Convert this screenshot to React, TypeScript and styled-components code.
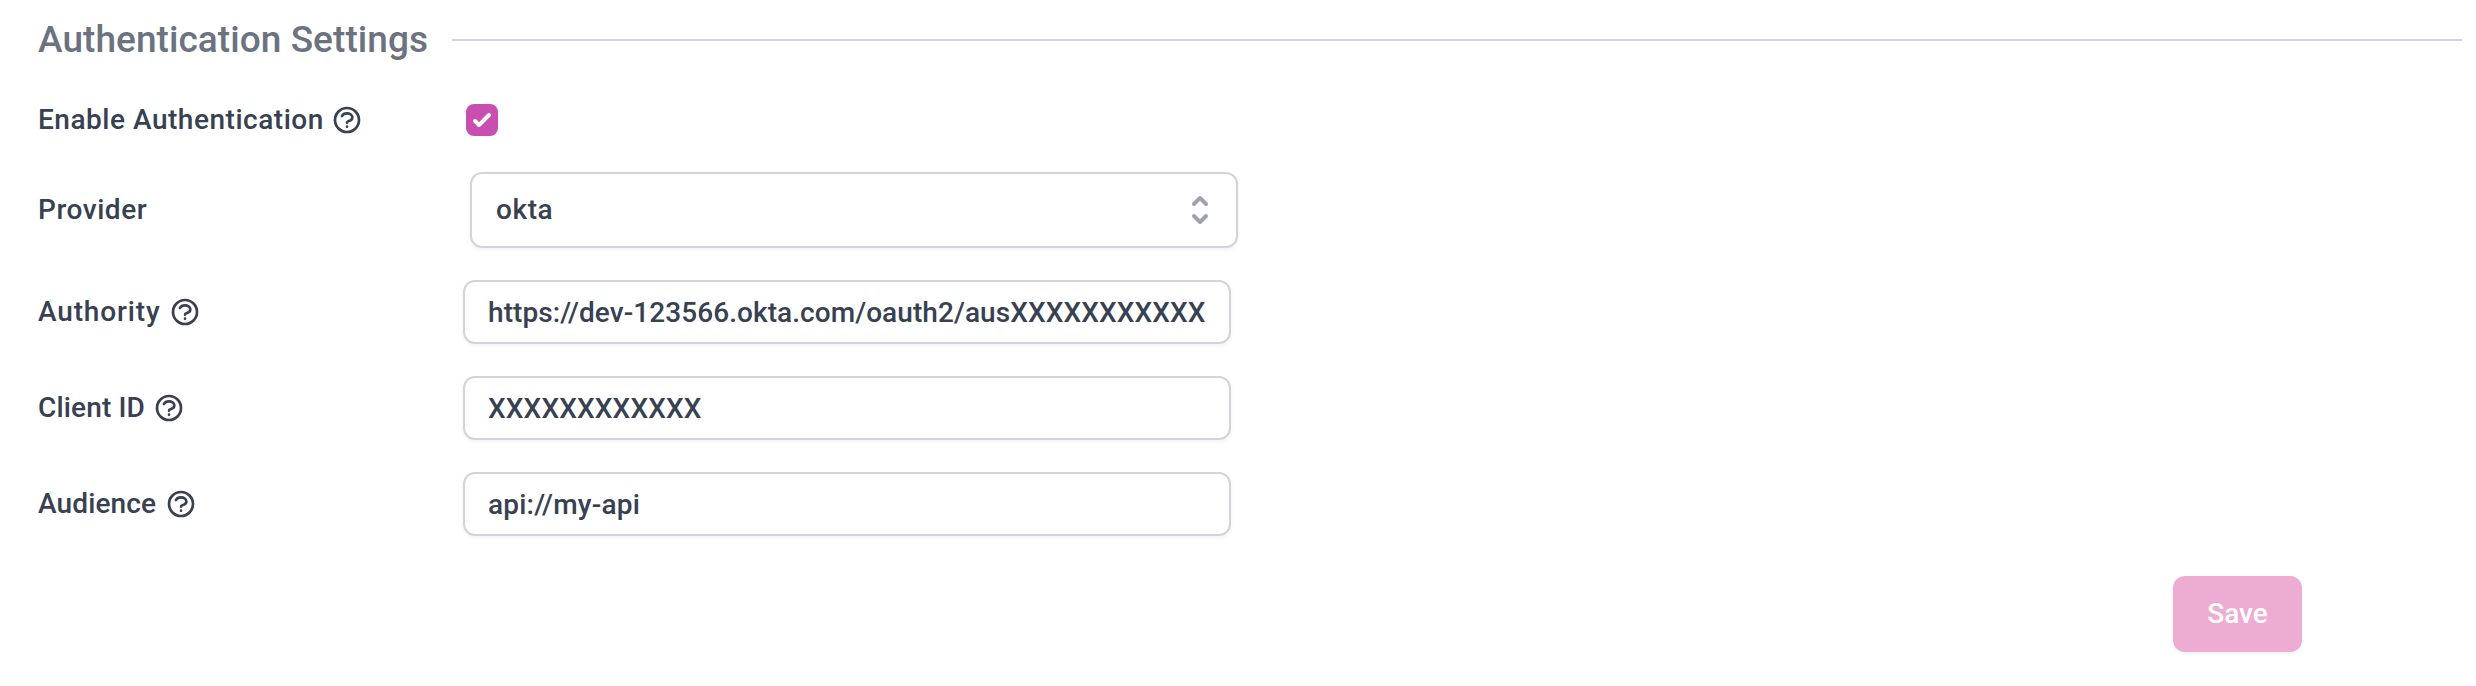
import React, { useState } from 'react';
import styled, { createGlobalStyle } from 'styled-components';

const GlobalStyle = createGlobalStyle`
  *, *::before, *::after { box-sizing: border-box; }
  body {
    margin: 0;
    background: #fff;
    color: #374151;
    font-family: Roboto, "Liberation Sans", sans-serif;
    font-size: 28px;
    font-weight: 500;
  }
`;

const Panel = styled.form`
  display: flex;
  flex-direction: column;
  width: 2476px;
  height: 686px;
  padding: 16px 14px 0 38px;
`;

const SectionHeader = styled.header`
  display: flex;
  align-items: center;
  height: 48px;
  gap: 24px;
`;

const Title = styled.h3`
  margin: 0;
  width: 390px;
  font-size: 37px;
  font-weight: 500;
  line-height: 48px;
  letter-spacing: 0.06px;
  white-space: nowrap;
  color: #6b7280;
`;

const Rule = styled.div`
  flex: 1;
  height: 2px;
  background: #d1d5db;
`;

const Fields = styled.div`
  display: flex;
  flex-direction: column;
  gap: 32px;
  margin-top: 36px;
`;

const Row = styled.div<{ $height: number; $indent?: number }>`
  display: grid;
  grid-template-columns: 425px 1fr;
  align-items: center;
  height: ${p => p.$height}px;

  > :last-child { margin-left: ${p => p.$indent ?? 0}px; }
`;

const Label = styled.label`
  display: flex;
  align-items: center;
`;

const LabelText = styled.span<{ $width: number; $tracking?: number }>`
  width: ${p => p.$width}px;
  line-height: 40px;
  letter-spacing: ${p => p.$tracking ?? 0}px;
  white-space: nowrap;
`;

const HelpSvg = styled.svg`
  width: 32px;
  height: 32px;
  flex: none;
`;

const Checkbox = styled.button`
  display: flex;
  width: 32px;
  height: 32px;
  padding: 0;
  border: 0;
  border-radius: 8px;
  background: #c84faf;

  svg { width: 32px; height: 32px; }
`;

const SelectButton = styled.button`
  display: flex;
  align-items: center;
  justify-content: space-between;
  width: 768px;
  height: 76px;
  padding: 0 16px 0 24px;
  border: 2px solid #d1d5db;
  border-radius: 12px;
  background: #fff;
  box-shadow: 0 2px 4px rgba(0, 0, 0, 0.05);
  color: inherit;
  font: inherit;
  letter-spacing: 0.6px;

  svg { width: 40px; height: 40px; }
`;

const SelectValue = styled.span`
  padding-bottom: 2px;
`;

const TextInput = styled.input<{ $tracking?: number }>`
  width: 768px;
  height: 64px;
  padding: 0 22px 0 23px;
  border: 2px solid #d1d5db;
  border-radius: 12px;
  outline: none;
  background: #fff;
  box-shadow: 0 2px 4px rgba(0, 0, 0, 0.05);
  color: inherit;
  font: inherit;
  letter-spacing: ${p => p.$tracking ?? 0}px;
`;

const Actions = styled.footer`
  display: flex;
  justify-content: flex-end;
  margin-top: 40px;
  padding-right: 160px;
`;

const SaveButton = styled.button`
  width: 129px;
  height: 76px;
  padding: 0 0 2px;
  border: 0;
  border-radius: 12px;
  background: #edacd2;
  box-shadow: 0 2px 4px rgba(0, 0, 0, 0.05);
  color: #fff;
  font: inherit;
`;

const HelpIcon = () => (
  <HelpSvg viewBox="0 0 24 24" fill="none" stroke="currentColor" strokeWidth="2" strokeLinecap="round" strokeLinejoin="round">
    <path d="M8.228 9c.549-1.165 2.03-2 3.772-2 2.21 0 4 1.343 4 3 0 1.4-1.278 2.575-3.006 2.907-.542.104-.994.54-.994 1.093m0 3h.01M21 12a9 9 0 11-18 0 9 9 0 0118 0z" />
  </HelpSvg>
);

const textFields = [
  { id: 'authority', label: 'Authority', width: 131, tracking: 0.85, value: 'https://dev-123566.okta.com/oauth2/ausXXXXXXXXXXX', inputTracking: 0.07 },
  { id: 'client', label: 'Client ID', width: 115, tracking: 0.15, value: 'XXXXXXXXXXXX', inputTracking: 0.12 },
  { id: 'audience', label: 'Audience', width: 127, tracking: 0.12, value: 'api://my-api', inputTracking: 0.2 },
];

export default function App() {
  const [enabled, setEnabled] = useState(true);
  return (
    <>
      <GlobalStyle />
      <Panel onSubmit={e => e.preventDefault()}>
        <SectionHeader>
          <Title>Authentication Settings</Title>
          <Rule />
        </SectionHeader>
        <Fields>
          <Row $height={40} $indent={3}>
            <Label>
              <LabelText $width={293} $tracking={0.52}>Enable Authentication</LabelText>
              <HelpIcon />
            </Label>
            <Checkbox type="button" role="checkbox" aria-checked={enabled} onClick={() => setEnabled(v => !v)}>
              {enabled && (
                <svg viewBox="0 0 16 16" fill="#fff">
                  <path d="M12.207 4.793a1 1 0 010 1.414l-5 5a1 1 0 01-1.414 0l-2-2a1 1 0 011.414-1.414L6.5 9.086l4.293-4.293a1 1 0 011.414 0z" />
                </svg>
              )}
            </Checkbox>
          </Row>
          <Row $height={76} $indent={7}>
            <Label>
              <LabelText $width={120} $tracking={0.55}>Provider</LabelText>
            </Label>
            <SelectButton type="button">
              <SelectValue>okta</SelectValue>
              <svg viewBox="0 0 20 20" fill="#9ca3af">
                <path fillRule="evenodd" clipRule="evenodd" d="M10 3a1 1 0 01.707.293l3 3a1 1 0 01-1.414 1.414L10 5.414 7.707 7.707a1 1 0 01-1.414-1.414l3-3A1 1 0 0110 3zm-3.707 9.293a1 1 0 011.414 0L10 14.586l2.293-2.293a1 1 0 011.414 1.414l-3 3a1 1 0 01-1.414 0l-3-3a1 1 0 010-1.414z" />
              </svg>
            </SelectButton>
          </Row>
          {textFields.map(f => (
            <Row key={f.id} $height={64}>
              <Label htmlFor={f.id}>
                <LabelText $width={f.width} $tracking={f.tracking}>{f.label}</LabelText>
                <HelpIcon />
              </Label>
              <TextInput id={f.id} defaultValue={f.value} $tracking={f.inputTracking} />
            </Row>
          ))}
        </Fields>
        <Actions>
          <SaveButton type="submit">Save</SaveButton>
        </Actions>
      </Panel>
    </>
  );
}
